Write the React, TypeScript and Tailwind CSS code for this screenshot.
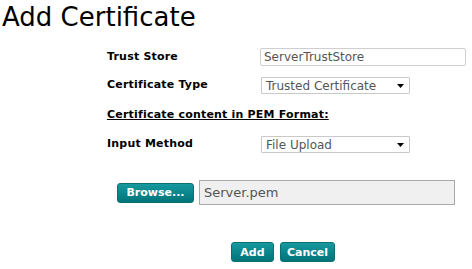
import React from "react";

function Arrow() {
  return (
    <svg width="7" height="4" viewBox="0 0 7 4" className="block">
      <path d="M0 0 H7 L3.5 4 Z" fill="#000" />
    </svg>
  );
}

function Select({ value }: { value: string }) {
  return (
    <div className="w-[149px] h-[17px] border border-[#c9c9c9] rounded-[1px] bg-white flex items-center justify-between pl-[4px] pr-[5px] text-[12px] text-[#555]">
      <span className="leading-none">{value}</span>
      <Arrow />
    </div>
  );
}

const btn =
  "h-[20px] rounded-[3px] bg-[linear-gradient(#16999f,#007479)] border border-[#0b6f73] text-white font-bold text-[11px] flex items-center justify-center leading-none";

export default function App() {
  return (
    <div className="w-[472px] h-[269px] bg-white font-['DejaVu_Sans',Verdana,sans-serif] text-black">
      <h1 className="text-[26px] leading-[30px] pl-[2px] pt-[2px]">Add Certificate</h1>
      <div className="pl-[107px] pt-[16px] flex flex-col">
        <div className="flex items-center h-[18px]">
          <div className="w-[153px] text-[11px] font-bold tracking-[0.2px]">Trust Store</div>
          <div className="w-[206px] h-[18px] border border-[#cfcfcf] rounded-[2px] flex items-center px-[3px] text-[12px] text-[#555]">
            ServerTrustStore
          </div>
        </div>
        <div className="flex items-center h-[17px] mt-[11px]">
          <div className="w-[154px] text-[11px] font-bold tracking-[0.2px]">Certificate Type</div>
          <Select value="Trusted Certificate" />
        </div>
        <div className="mt-[14px] text-[11px] font-bold underline leading-[14px] tracking-[0.2px]">
          Certificate content in PEM Format:
        </div>
        <div className="flex items-center h-[17px] mt-[14px]">
          <div className="w-[154px] text-[11px] font-bold tracking-[0.2px]">Input Method</div>
          <Select value="File Upload" />
        </div>
        <div className="flex items-center mt-[27px] pl-[10px] gap-[5px]">
          <div className={btn + " w-[77px] h-[19px]"}>Browse...</div>
          <div className="w-[256px] h-[25px] bg-[#f0f0f0] border border-[#a9a9a9] flex items-center px-[4px] text-[13px] text-[#555]">
            Server.pem
          </div>
        </div>
        <div className="flex mt-[37px] pl-[124px] gap-[6px]">
          <div className={btn + " w-[43px]"}>Add</div>
          <div className={btn + " w-[55px]"}>Cancel</div>
        </div>
      </div>
    </div>
  );
}
